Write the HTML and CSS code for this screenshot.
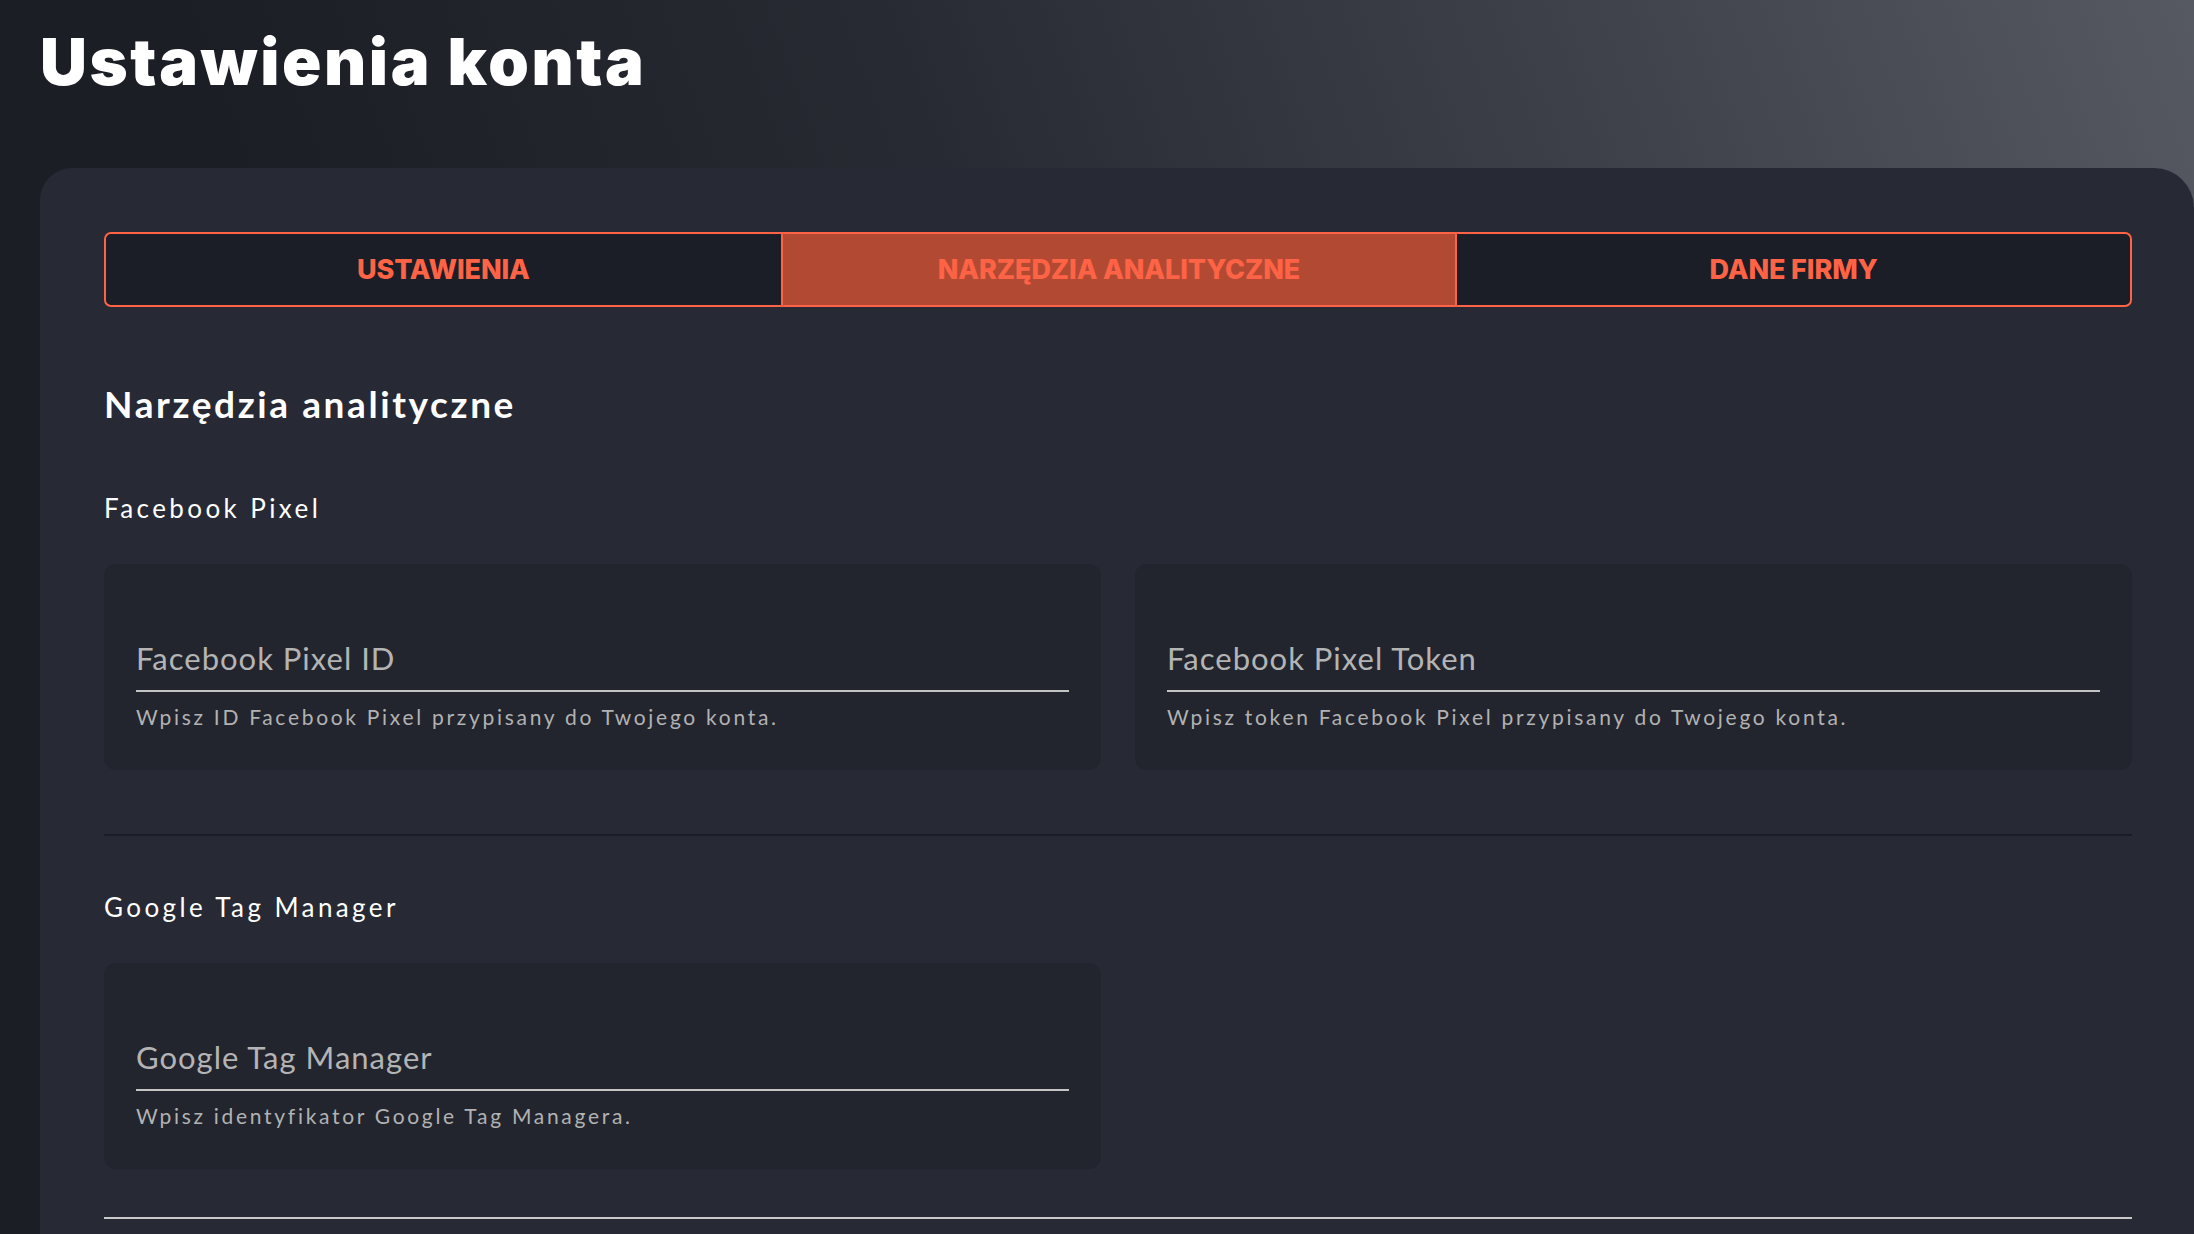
FILE: index.html
```html
<!DOCTYPE html>
<html lang="pl">
<head>
    <meta charset="UTF-8">
    <meta name="viewport" content="width=device-width, initial-scale=1.0">
    <title>Ustawienia konta</title>
    <link rel="stylesheet" href="styles.css">
</head>
<body>
    <div class="page">
        <!-- naglowek strony -->
        <header class="header">
            <h1 class="title">Ustawienia konta</h1>
        </header>

        <main class="panel">
            <!-- zakladki -->
            <nav class="tabs">
                <a class="tab" href="#">USTAWIENIA</a>
                <a class="tab active" href="#">NARZĘDZIA ANALITYCZNE</a>
                <a class="tab" href="#">DANE FIRMY</a>
            </nav>

            <h2 class="panel-title">Narzędzia analityczne</h2>

            <section class="group">
                <h3 class="group-title">Facebook Pixel</h3>
                <div class="fields">
                    <div class="field">
                        <label class="field-input">Facebook Pixel ID</label>
                        <p class="field-hint">Wpisz ID Facebook Pixel przypisany do Twojego konta.</p>
                    </div>
                    <div class="field">
                        <label class="field-input">Facebook Pixel Token</label>
                        <p class="field-hint">Wpisz token Facebook Pixel przypisany do Twojego konta.</p>
                    </div>
                </div>
            </section>

            <section class="group last">
                <h3 class="group-title">Google Tag Manager</h3>
                <div class="fields">
                    <div class="field">
                        <label class="field-input">Google Tag Manager</label>
                        <p class="field-hint">Wpisz identyfikator Google Tag Managera.</p>
                    </div>
                </div>
            </section>

            <hr class="bottom-line">
        </main>
    </div>
</body>
</html>
```

FILE: styles.css
```css
html,
body {
    margin: 0;
    padding: 0;
}

body {
    background: #1c1e25;
    font-family: Lato, "Noto Sans", sans-serif;
    color: #fff;
}

.page {
    min-height: 100vh;
    padding-left: 40px;
    overflow: hidden;
    background: linear-gradient(250deg, #565862 0%, #3e404a 24%, #282a33 50%, #1c1e25 76%);
}

.header {
    height: 168px;
    box-sizing: border-box;
    padding-top: 29px;
}

.title {
    margin: 0;
    font-family: Inter, "Noto Sans", sans-serif;
    font-weight: 900;
    font-size: 65px;
    line-height: 65px;
    letter-spacing: 0.04em;
    color: #fff;
}

.panel {
    background: #272a35;
    border-radius: 32px 40px 0 0;
    padding: 64px 62px 16px 64px;
    min-height: 1000px;
}

/* zakladki */
.tabs {
    display: grid;
    grid-template-columns: 1fr 1fr 1fr;
    height: 75px;
    box-sizing: border-box;
    border: 2px solid #ff6346;
    border-radius: 7px;
    overflow: hidden;
    background: #1b1e26;
}

.tab {
    display: flex;
    align-items: center;
    justify-content: center;
    font-family: Inter, "Noto Sans", sans-serif;
    font-weight: 800;
    font-size: 27px;
    letter-spacing: -0.1px;
    color: #ff6346;
    text-decoration: none;
}

.tab + .tab {
    border-left: 2px solid #ff6346;
}

.tab.active {
    background: #b24a33;
}

.panel-title {
    margin: 79px 0 0 0;
    font-weight: 700;
    font-size: 37px;
    line-height: 36px;
    letter-spacing: 2.6px;
}

.group {
    padding-bottom: 64px;
    border-bottom: 2px solid #1b1d25;
}

.group-title {
    margin: 74px 0 43px 0;
    font-weight: 400;
    font-size: 26px;
    line-height: 25px;
    letter-spacing: 3.4px;
}

.group + .group .group-title {
    margin-top: 59px;
}

.group.last {
    padding-bottom: 0;
    border-bottom: none;
}

.fields {
    display: grid;
    grid-template-columns: 1fr 1fr;
    column-gap: 34px;
}

.field {
    height: 206px;
    box-sizing: border-box;
    padding: 79px 32px 0 32px;
    border-radius: 12px;
    background: #22252e;
}

.field-input {
    display: block;
    padding-bottom: 16px;
    border-bottom: 2px solid #c4c4c4;
    font-size: 31px;
    line-height: 31px;
    letter-spacing: 1px;
    color: #b4b4b4;
}

.field-hint {
    margin: 15px 0 0 0;
    font-size: 21px;
    line-height: 20px;
    letter-spacing: 2.7px;
    color: #b2b2b2;
}

.bottom-line {
    margin: 48px 0 0 0;
    height: 2px;
    border: none;
    background: #c8c8c8;
}
```
